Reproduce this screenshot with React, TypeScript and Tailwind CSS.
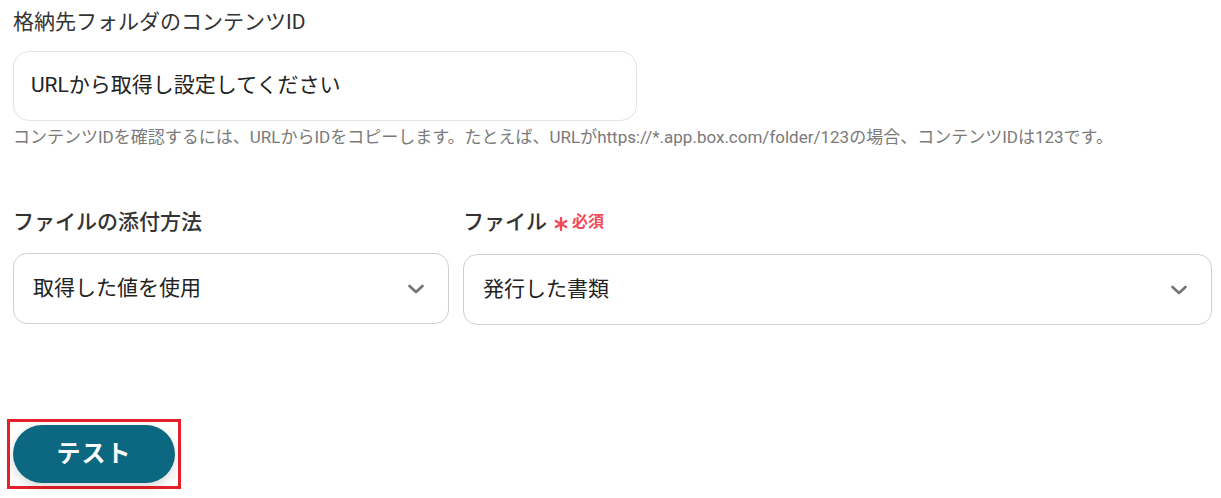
const font = { fontFamily: 'Roboto, "Noto Sans CJK JP", sans-serif' }

function Chevron() {
  return (
    <svg width="18" height="12" viewBox="0 0 18 12" fill="none">
      <polyline points="2.5,3 9,9 15.5,3" stroke="#737373" strokeWidth="2.6" strokeLinecap="round" strokeLinejoin="round" />
    </svg>
  )
}

function SelectBox({ value }: { value: string }) {
  return (
    <div className="flex h-[71px] items-center justify-between rounded-[14px] border border-[#cfcfcf] bg-white pl-[19px] pr-[23px]">
      <span className="text-[21px] text-[#222]">{value}</span>
      <Chevron />
    </div>
  )
}

function Asterisk() {
  return (
    <svg width="16" height="16" viewBox="0 0 16 16" className="ml-[6px] mt-[4px]">
      <g stroke="#f04a5b" strokeWidth="2.4" strokeLinecap="round">
        <line x1="8" y1="2" x2="8" y2="14" />
        <line x1="2.8" y1="5" x2="13.2" y2="11" />
        <line x1="2.8" y1="11" x2="13.2" y2="5" />
      </g>
    </svg>
  )
}

export default function App() {
  return (
    <div className="h-[498px] w-[1221px] overflow-hidden bg-white pl-[13px] pr-[9px]" style={font}>
      <div className="pt-[8px]">
        <h3 className="text-[21px] font-normal leading-[28px] text-[#333]">格納先フォルダのコンテンツID</h3>
        <div className="mt-[15px] flex h-[70px] w-[624px] items-center rounded-[16px] border border-[#e2e2ea] pl-[17px]">
          <span className="text-[21px] text-[#222]">URLから取得し設定してください</span>
        </div>
        <p className="mt-[5px] text-[17px] leading-[22px] text-[#7a7a7a] [text-spacing-trim:trim-all]">
          コンテンツIDを確認するには、URLからIDをコピーします。たとえば、URLがhttps://*.app.box.com/folder/123の場合、コンテンツIDは123です。
        </p>
      </div>

      <div className="mt-[60px] grid grid-cols-[436px_1fr] gap-x-[14px]">
        <div>
          <label className="block text-[21px] font-medium leading-[28px] text-[#333]">ファイルの添付方法</label>
          <div className="mt-[17px]">
            <SelectBox value="取得した値を使用" />
          </div>
        </div>
        <div>
          <label className="flex items-center text-[21px] font-medium leading-[28px] text-[#333]">
            ファイル
            <Asterisk />
            <span className="ml-[3px] text-[16px] font-bold text-[#f04a5b]">必須</span>
          </label>
          <div className="mt-[18px]">
            <SelectBox value="発行した書類" />
          </div>
        </div>
      </div>

      <div className="mt-[94px] ml-[-6px] inline-block border-[3px] border-[#e5202a] p-[3px]">
        <button className="flex h-[58px] w-[162px] items-center justify-center rounded-full bg-[#0b6880] text-[24px] font-bold tracking-[1px] text-white shadow-[0_4px_12px_rgba(0,0,0,0.15)]">
          テスト
        </button>
      </div>
    </div>
  )
}
